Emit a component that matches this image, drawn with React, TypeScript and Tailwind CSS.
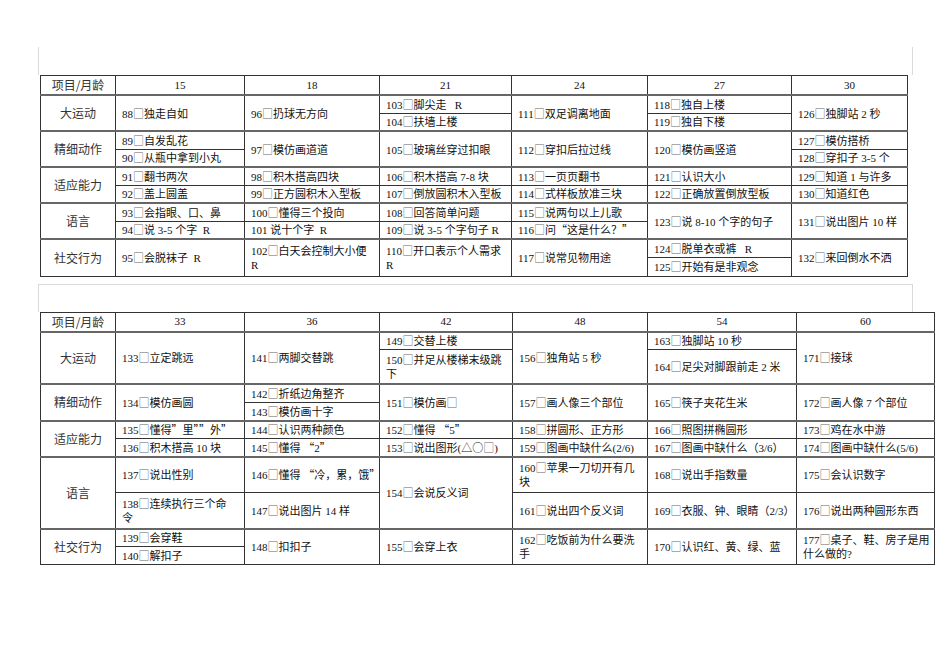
import { Fragment } from "react";

type Cell = string | [string, string];

interface Group {
  label: string;
  h: [number, number];
  cells: Cell[];
}

const H: Record<number, string> = {
  17: "h-[17px]",
  18: "h-[18px]",
  19: "h-[19px]",
  20: "h-[20px]",
  34: "h-[34px]",
  35: "h-[35px]",
  36: "h-[36px]",
};

const top: Group[] = [
  {
    label: "大运动",
    h: [18, 18],
    cells: [
      "88□独走自如",
      "96□扔球无方向",
      ["103□脚尖走\u00a0\u00a0\u00a0R", "104□扶墙上楼"],
      "111□双足调离地面",
      ["118□独自上楼", "119□独自下楼"],
      "126□独脚站 2 秒",
    ],
  },
  {
    label: "精细动作",
    h: [18, 18],
    cells: [
      ["89□自发乱花", "90□从瓶中拿到小丸"],
      "97□模仿画道道",
      "105□玻璃丝穿过扣眼",
      "112□穿扣后拉过线",
      "120□模仿画竖道",
      ["127□模仿搭桥", "128□穿扣子 3-5 个"],
    ],
  },
  {
    label: "适应能力",
    h: [18, 18],
    cells: [
      ["91□翻书两次", "92□盖上圆盖"],
      ["98□积木搭高四块", "99□正方圆积木入型板"],
      ["106□积木搭高 7-8 块", "107□倒放圆积木入型板"],
      ["113□一页页翻书", "114□式样板放准三块"],
      ["121□认识大小", "122□正确放置倒放型板"],
      ["129□知道 1 与许多", "130□知道红色"],
    ],
  },
  {
    label: "语言",
    h: [18, 18],
    cells: [
      ["93□会指眼、口、鼻", "94□说 3-5 个字\u00a0\u00a0R"],
      ["100□懂得三个投向", "101 说十个字\u00a0\u00a0R"],
      ["108□回答简单问题", "109□说 3-5 个字句子 R"],
      ["115□说两句以上儿歌", "116□问“这是什么？”"],
      "123□说 8-10 个字的句子",
      "131□说出图片 10 样",
    ],
  },
  {
    label: "社交行为",
    h: [18, 19],
    cells: [
      "95□会脱袜子\u00a0\u00a0R",
      "102□白天会控制大小便\nR",
      "110□开口表示个人需求\nR",
      "117□说常见物用途",
      ["124□脱单衣或裤\u00a0\u00a0\u00a0R", "125□开始有是非观念"],
      "132□来回倒水不洒",
    ],
  },
];

const bottom: Group[] = [
  {
    label: "大运动",
    h: [18, 34],
    cells: [
      "133□立定跳远",
      "141□两脚交替跳",
      ["149□交替上楼", "150□并足从楼梯末级跳\n下"],
      "156□独角站 5 秒",
      ["163□独脚站 10 秒", "164□足尖对脚跟前走 2 米"],
      "171□接球",
    ],
  },
  {
    label: "精细动作",
    h: [19, 18],
    cells: [
      "134□模仿画圆",
      ["142□折纸边角整齐", "143□模仿画十字"],
      "151□模仿画□",
      "157□画人像三个部位",
      "165□筷子夹花生米",
      "172□画人像 7 个部位",
    ],
  },
  {
    label: "适应能力",
    h: [18, 18],
    cells: [
      ["135□懂得”里””外”", "136□积木搭高 10 块"],
      ["144□认识两种颜色", "145□懂得 “2”"],
      ["152□懂得 “5”", "153□说出图形(△○□)"],
      ["158□拼圆形、正方形", "159□图画中缺什么(2/6)"],
      ["166□照图拼椭圆形", "167□图画中缺什么（3/6）"],
      ["173□鸡在水中游", "174□图画中缺什么(5/6)"],
    ],
  },
  {
    label: "语言",
    h: [36, 36],
    cells: [
      ["137□说出性别", "138□连续执行三个命\n令"],
      ["146□懂得 “冷，累，饿”", "147□说出图片 14 样"],
      "154□会说反义词",
      ["160□苹果一刀切开有几\n块", "161□说出四个反义词"],
      ["168□说出手指数量", "169□衣服、钟、眼睛（2/3）"],
      ["175□会认识数字", "176□说出两种圆形东西"],
    ],
  },
  {
    label: "社交行为",
    h: [18, 18],
    cells: [
      ["139□会穿鞋", "140□解扣子"],
      "148□扣扣子",
      "155□会穿上衣",
      "162□吃饭前为什么要洗\n手",
      "170□认识红、黄、绿、蓝",
      "177□桌子、鞋、房子是用\n什么做的?",
    ],
  },
];

// glyphs that the serif latin font draws too narrow: let the CJK font draw them
function Line({ s }: { s: string }) {
  const parts = s.split(/([□△○“”])/);
  return (
    <div>
      {parts.map((p, i) =>
        i % 2 === 1 ? (
          <span
            key={i}
            className={`font-['Noto_Sans_CJK_SC',sans-serif] ${p === "□" ? "text-[#666]" : ""}`}
          >
            {p}
          </span>
        ) : (
          <Fragment key={i}>{p}</Fragment>
        )
      )}
    </div>
  );
}

function Txt({ s }: { s: string }) {
  return (
    <>
      {s.split("\n").map((l, i) => (
        <Line key={i} s={l} />
      ))}
    </>
  );
}

const td =
  "border border-[#333] pl-[6px] pr-0 py-0 text-left align-middle whitespace-pre overflow-hidden text-[11px] leading-[14px] font-normal";
const groupTop = "border-t-2 border-t-[#666]";

function Sheet({
  ages,
  widths,
  tableW,
  groups,
}: {
  ages: string[];
  widths: string[];
  tableW: string;
  groups: Group[];
}) {
  return (
    <table
      className={`ml-[40px] table-fixed border-collapse border border-[#333] text-[#111] ${tableW}`}
    >
      <colgroup>
        {widths.map((w, i) => (
          <col key={i} className={w} />
        ))}
      </colgroup>
      <thead>
        <tr className="h-[18px]">
          <th className="border border-[#333] p-0 text-center align-middle text-[12px] font-normal font-['Noto_Sans_CJK_SC',sans-serif] text-[#333]">
            项目/月龄
          </th>
          {ages.map((a) => (
            <th
              key={a}
              className="border border-[#333] p-0 text-center align-middle text-[11px] font-normal"
            >
              {a}
            </th>
          ))}
        </tr>
      </thead>
      <tbody>
        {groups.map((g) => (
          <Fragment key={g.label}>
            <tr className={H[g.h[0]]}>
              <td
                rowSpan={2}
                className={`border border-[#333] ${groupTop} p-0 text-center align-middle text-[12px] font-['Noto_Sans_CJK_SC',sans-serif] text-[#333]`}
              >
                {g.label}
              </td>
              {g.cells.map((c, i) =>
                typeof c === "string" ? (
                  <td key={i} rowSpan={2} className={`${td} ${groupTop}`}>
                    <Txt s={c} />
                  </td>
                ) : (
                  <td key={i} className={`${td} ${groupTop}`}>
                    <Txt s={c[0]} />
                  </td>
                )
              )}
            </tr>
            <tr className={H[g.h[1]]}>
              {g.cells.map((c, i) =>
                typeof c === "string" ? null : (
                  <td key={i} className={td}>
                    <Txt s={c[1]} />
                  </td>
                )
              )}
            </tr>
          </Fragment>
        ))}
      </tbody>
    </table>
  );
}

export default function App() {
  return (
    <div className="w-[950px] h-[672px] bg-white pt-[47px] font-['Liberation_Serif','Noto_Sans_CJK_SC',serif]">
      <div className="ml-[38px] w-[875px] h-[28px] border-l border-r border-[#d9d9d9]" />
      <Sheet
        ages={["15", "18", "21", "24", "27", "30"]}
        widths={["w-[75px]", "w-[129px]", "w-[135px]", "w-[132px]", "w-[136px]", "w-[144px]", "w-[116px]"]}
        tableW="w-[867px]"
        groups={top}
      />
      <div className="mt-[7px] ml-[38px] w-[875px] h-[28px] border-t border-l border-r border-[#d9d9d9]" />
      <Sheet
        ages={["33", "36", "42", "48", "54", "60"]}
        widths={["w-[75px]", "w-[129px]", "w-[135px]", "w-[133px]", "w-[135px]", "w-[149px]", "w-[138px]"]}
        tableW="w-[894px]"
        groups={bottom}
      />
    </div>
  );
}
